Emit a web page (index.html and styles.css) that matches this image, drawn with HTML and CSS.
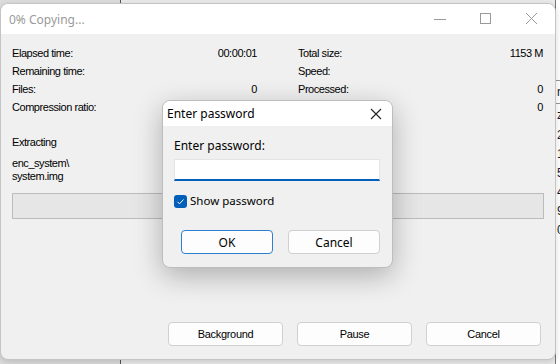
FILE: index.html
```html
<!DOCTYPE html>
<html lang="en">
<head>
    <meta charset="UTF-8">
    <title>0% Copying...</title>
    <link rel="stylesheet" href="styles.css">
</head>
<body>
    <div class="desktop">
        <!-- Window behind, only its edge shows -->
        <div class="bg-window">
            <div class="bg-row bg-line">r</div>
            <div class="bg-row bg-line">z</div>
            <div class="bg-row">2</div>
            <div class="bg-row">1</div>
            <div class="bg-row">5</div>
            <div class="bg-row">4</div>
            <div class="bg-row">9</div>
            <div class="bg-row">0</div>
        </div>

        <!-- Copy progress window -->
        <div class="window">
            <div class="titlebar">
                <span class="title">0% Copying...</span>
                <div class="controls">
                    <svg width="46" height="30" viewBox="0 0 46 30"><path d="M17 15.5h12" stroke="#999" stroke-width="1"/></svg>
                    <svg width="46" height="30" viewBox="0 0 46 30"><rect x="17.5" y="9.5" width="10" height="10" fill="none" stroke="#999" stroke-width="1"/></svg>
                    <svg width="46" height="30" viewBox="0 0 46 30"><path d="M17 9l11 11M28 9L17 20" stroke="#999" stroke-width="1"/></svg>
                </div>
            </div>

            <div class="content">
                <div class="stats">
                    <div class="stat"><span>Elapsed time:</span><span>00:00:01</span></div>
                    <div class="stat"><span>Total size:</span><span>1153 M</span></div>
                    <div class="stat"><span>Remaining time:</span><span></span></div>
                    <div class="stat"><span>Speed:</span><span></span></div>
                    <div class="stat"><span>Files:</span><span>0</span></div>
                    <div class="stat"><span>Processed:</span><span>0</span></div>
                    <div class="stat"><span>Compression ratio:</span><span></span></div>
                    <div class="stat"><span>Compressed size:</span><span>0</span></div>
                </div>

                <div class="status">Extracting</div>
                <div class="path">enc_system\<br>system.img</div>
                <div class="progress"></div>

                <div class="actions">
                    <button class="btn">Background</button>
                    <button class="btn">Pause</button>
                    <button class="btn">Cancel</button>
                </div>
            </div>
        </div>

        <!-- Password prompt on top -->
        <div class="dialog">
            <div class="dialog-title">
                <span>Enter password</span>
                <svg width="14" height="14" viewBox="0 0 14 14"><path d="M2 2l10 10M12 2L2 12" stroke="#222" stroke-width="1.1"/></svg>
            </div>
            <div class="dialog-body">
                <label class="field-label">Enter password:</label>
                <div class="field"></div>
                <div class="check-row">
                    <span class="checkbox">
                        <svg width="13" height="13" viewBox="0 0 13 13"><path d="M3.5 6.8l2 2 4-4.3" fill="none" stroke="#fff" stroke-width="1"/></svg>
                    </span>
                    <span>Show password</span>
                </div>
                <div class="dialog-actions">
                    <button class="dbtn default">OK</button>
                    <button class="dbtn">Cancel</button>
                </div>
            </div>
        </div>
    </div>
</body>
</html>
```

FILE: styles.css
```css
html, body {
    margin: 0;
    padding: 0;
}

body {
    background-color: #e9e9e9;
    width: 560px;
    height: 364px;
    overflow: hidden;
}

.desktop {
    position: relative;
    width: 560px;
    height: 364px;
    overflow: hidden;
    background: linear-gradient(to right, #dcdcdc 0, #dcdcdc 120px, #555 120px, #555 121px, #eaeaea 121px);
}

/* window peeking out on the right */
.bg-window {
    position: absolute;
    left: 555px;
    top: 0;
    width: 5px;
    height: 364px;
    box-sizing: border-box;
    background-color: #fff;
    border-left: 1px solid #777;
    padding-top: 80px;
    font-family: 'Liberation Sans', Arial, sans-serif;
    font-size: 12px;
    color: #1a1a2a;
    overflow: hidden;
}

.bg-row {
    height: 19px;
    line-height: 19px;
    padding-left: 1px;
}

.bg-line {
    border-top: 1px solid #999;
    height: 22px;
    line-height: 22px;
}

/* main window */
.window {
    position: absolute;
    left: 0;
    top: 3px;
    width: 554px;
    height: 355px;
    background-color: #f0f0f0;
    border: 1px solid #c4c4c4;
    border-radius: 8px;
    overflow: hidden;
    display: flex;
    flex-direction: column;
    box-shadow: 0 2px 6px rgba(0, 0, 0, 0.15);
}

.titlebar {
    height: 30px;
    background-color: #fff;
    display: flex;
    align-items: center;
    justify-content: space-between;
    flex-shrink: 0;
}

.title {
    padding-left: 8px;
    font-family: 'Noto Sans', sans-serif;
    font-size: 12px;
    color: #9a9a9a;
}

.controls {
    display: flex;
    height: 30px;
}

.content {
    flex: 1;
    display: flex;
    flex-direction: column;
    padding: 10px 11px 13px 11px;
    font-family: 'Liberation Sans', Arial, sans-serif;
    font-size: 11px;
    letter-spacing: -0.45px;
    color: #000;
}

.stats {
    display: grid;
    grid-template-columns: 245px 245px;
    column-gap: 41px;
}

.stat {
    display: flex;
    justify-content: space-between;
    height: 18px;
    line-height: 18px;
}

.status {
    margin-top: 18px;
    line-height: 16px;
}

.path {
    margin-top: 7px;
    line-height: 13px;
}

.progress {
    margin-top: 10px;
    height: 24px;
    width: 530px;
    background-color: #e6e6e6;
    border: 1px solid #bcbcbc;
}

.actions {
    margin-top: auto;
    display: flex;
    justify-content: flex-end;
    gap: 14px;
    padding-right: 3px;
}

.btn {
    width: 115px;
    height: 24px;
    background-color: #fdfdfd;
    border: 1px solid #d0d0d0;
    border-radius: 4px;
    font-family: 'Liberation Sans', Arial, sans-serif;
    font-size: 11px;
    letter-spacing: -0.3px;
    color: #000;
    padding: 0;
}

/* password dialog */
.dialog {
    position: absolute;
    left: 162px;
    top: 100px;
    width: 229px;
    height: 166px;
    background-color: #f0f0f0;
    border: 1px solid #bdbdbd;
    border-radius: 8px;
    overflow: hidden;
    box-shadow: 0 8px 28px rgba(0, 0, 0, 0.28);
    font-family: 'Noto Sans', sans-serif;
    font-size: 12px;
    color: #000;
}

.dialog-title {
    height: 25px;
    background-color: #fff;
    display: flex;
    align-items: center;
    justify-content: space-between;
    padding: 0 9px 0 4px;
}

.dialog-body {
    padding: 12px 11px 0 11px;
    display: flex;
    flex-direction: column;
}

.field-label {
    line-height: 16px;
}

.field {
    margin-top: 5px;
    width: 206px;
    height: 22px;
    box-sizing: border-box;
    background-color: #fff;
    border: 1px solid #e4e4e4;
    border-bottom: 2px solid #005fb8;
}

.check-row {
    margin-top: 12px;
    display: flex;
    align-items: center;
    gap: 3px;
    line-height: 16px;
    font-size: 11.5px;
}

.checkbox {
    width: 13px;
    height: 13px;
    background-color: #005fb8;
    border-radius: 3px;
    display: flex;
}

.dialog-actions {
    margin-top: 21px;
    display: flex;
    justify-content: space-between;
    padding: 0 1px 0 7px;
}

.dbtn {
    width: 92px;
    height: 24px;
    background-color: #fdfdfd;
    border: 1px solid #d0d0d0;
    border-radius: 4px;
    font-family: 'Noto Sans', sans-serif;
    font-size: 12px;
    color: #000;
    padding: 0;
}

.dbtn.default {
    border: 1px solid #2f7fd0;
}
```
